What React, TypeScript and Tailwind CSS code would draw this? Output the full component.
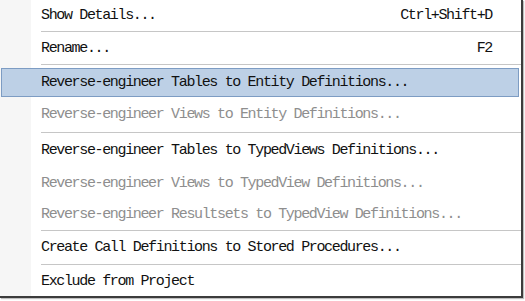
function Sep() {
  return <div className="ml-[41px] h-px bg-[#c6c6c6]" />;
}

function Item({
  label,
  shortcut,
  disabled,
  h,
}: {
  label: string;
  shortcut?: string;
  disabled?: boolean;
  h: string;
}) {
  return (
    <div className={`${h} flex items-center justify-between pl-[41px] pr-[29px]`}>
      <span className={disabled ? 'text-[#8e8e8e]' : 'text-[#111]'}>{label}</span>
      {shortcut && <span className="text-[#111]">{shortcut}</span>}
    </div>
  );
}

export default function App() {
  return (
    <div className="w-[525px] h-[301px] bg-white overflow-hidden">
      <div
        className="w-[523px] h-[298px] border-r-2 border-b-2 border-[#3c3c3c] bg-[linear-gradient(to_right,#f6f6f6_31px,#ffffff_31px)] shadow-[1px_1px_1px_rgba(0,0,0,0.25)] text-[15px] tracking-[-1.35px] leading-none whitespace-pre"
        style={{ fontFamily: '"Liberation Mono", "DejaVu Sans Mono", monospace' }}
      >
        <Item h="h-[31px]" label="Show Details..." shortcut="Ctrl+Shift+D" />
        <Sep />
        <Item h="h-[32px]" label="Rename..." shortcut="F2" />
        <Sep />
        <div className="pt-[3px]">
          <div className="ml-px mr-[2px] h-[29px] flex items-center pl-[39px] bg-[#bdd0e6] border border-[#7d9cc3] text-[#111]">
            Reverse-engineer Tables to Entity Definitions...
          </div>
        </div>
        <Item h="h-[35px]" label="Reverse-engineer Views to Entity Definitions..." disabled />
        <Sep />
        <Item h="h-[34px]" label="Reverse-engineer Tables to TypedViews Definitions..." />
        <Item h="h-[32px]" label="Reverse-engineer Views to TypedView Definitions..." disabled />
        <Item h="h-[31px]" label="Reverse-engineer Resultsets to TypedView Definitions..." disabled />
        <Sep />
        <Item h="h-[33px]" label="Create Call Definitions to Stored Procedures..." />
        <Sep />
        <Item h="h-[32px]" label="Exclude from Project" />
      </div>
    </div>
  );
}
